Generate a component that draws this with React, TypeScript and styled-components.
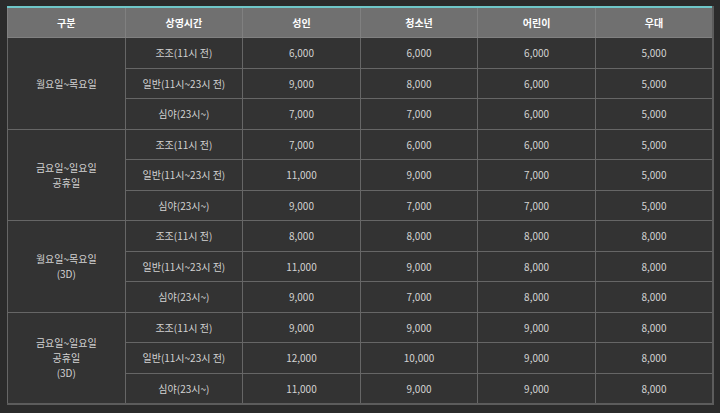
import React from "react"
import styled, { createGlobalStyle } from "styled-components"

const GlobalStyle = createGlobalStyle`
  html, body {
    margin: 0;
    padding: 0;
    background: #2b2b2b;
  }
  body {
    font-family: "Noto Sans CJK KR", "Noto Sans", sans-serif;
  }
`

type Slot = { label: string; prices: string[] }
type Group = { title: string[]; slots: Slot[] }

const headers = ["구분", "상영시간", "성인", "청소년", "어린이", "우대"]

const groups: Group[] = [
  {
    title: ["월요일~목요일"],
    slots: [
      { label: "조조(11시 전)", prices: ["6,000", "6,000", "6,000", "5,000"] },
      { label: "일반(11시~23시 전)", prices: ["9,000", "8,000", "6,000", "5,000"] },
      { label: "심야(23시~)", prices: ["7,000", "7,000", "6,000", "5,000"] },
    ],
  },
  {
    title: ["금요일~일요일", "공휴일"],
    slots: [
      { label: "조조(11시 전)", prices: ["7,000", "6,000", "6,000", "5,000"] },
      { label: "일반(11시~23시 전)", prices: ["11,000", "9,000", "7,000", "5,000"] },
      { label: "심야(23시~)", prices: ["9,000", "7,000", "7,000", "5,000"] },
    ],
  },
  {
    title: ["월요일~목요일", "(3D)"],
    slots: [
      { label: "조조(11시 전)", prices: ["8,000", "8,000", "8,000", "8,000"] },
      { label: "일반(11시~23시 전)", prices: ["11,000", "9,000", "8,000", "8,000"] },
      { label: "심야(23시~)", prices: ["9,000", "7,000", "8,000", "8,000"] },
    ],
  },
  {
    title: ["금요일~일요일", "공휴일", "(3D)"],
    slots: [
      { label: "조조(11시 전)", prices: ["9,000", "9,000", "9,000", "8,000"] },
      { label: "일반(11시~23시 전)", prices: ["12,000", "10,000", "9,000", "8,000"] },
      { label: "심야(23시~)", prices: ["11,000", "9,000", "9,000", "8,000"] },
    ],
  },
]

export default function App() {
  return (
    <Page>
      <GlobalStyle />
      <PriceTable>
        <thead>
          <tr>
            {headers.map((h) => (
              <HeadCell key={h}>{h}</HeadCell>
            ))}
          </tr>
        </thead>
        <tbody>
          {groups.map((g, gi) =>
            g.slots.map((s, si) => (
              <Row key={`${gi}-${si}`}>
                {si === 0 && (
                  <Cell rowSpan={g.slots.length}>
                    {g.title.map((t) => (
                      <TitleLine key={t}>{t}</TitleLine>
                    ))}
                  </Cell>
                )}
                <Cell>{s.label}</Cell>
                {s.prices.map((p, pi) => (
                  <Cell key={pi}>{p}</Cell>
                ))}
              </Row>
            ))
          )}
        </tbody>
      </PriceTable>
    </Page>
  )
}

const Page = styled.div`
  width: 720px;
  height: 413px;
  padding: 6px 0 0 7px;
  box-sizing: border-box;
  background: #2b2b2b;
  overflow: hidden;
`

const PriceTable = styled.table`
  width: 707px;
  border-collapse: collapse;
  table-layout: fixed;
  background: #333333;
  border-top: 2px solid #6fc7c9;
  border-right: 2px solid #5c5c5c;
  border-bottom: 2px solid #5c5c5c;
  border-left: 1px solid #5c5c5c;
`

const HeadCell = styled.th`
  height: 29px;
  padding: 0;
  background: #707070;
  color: #ffffff;
  font-size: 10px;
  font-weight: 700;
  text-align: center;
  vertical-align: middle;
  border: 1px solid #808080;
  border-top: none;
`

const Row = styled.tr`
  height: 30.5px;
`

const Cell = styled.td`
  padding: 0;
  color: #d2d2d2;
  font-size: 10px;
  text-align: center;
  vertical-align: middle;
  border: 1px solid #666666;
`

const TitleLine = styled.div`
  line-height: 15px;
`
